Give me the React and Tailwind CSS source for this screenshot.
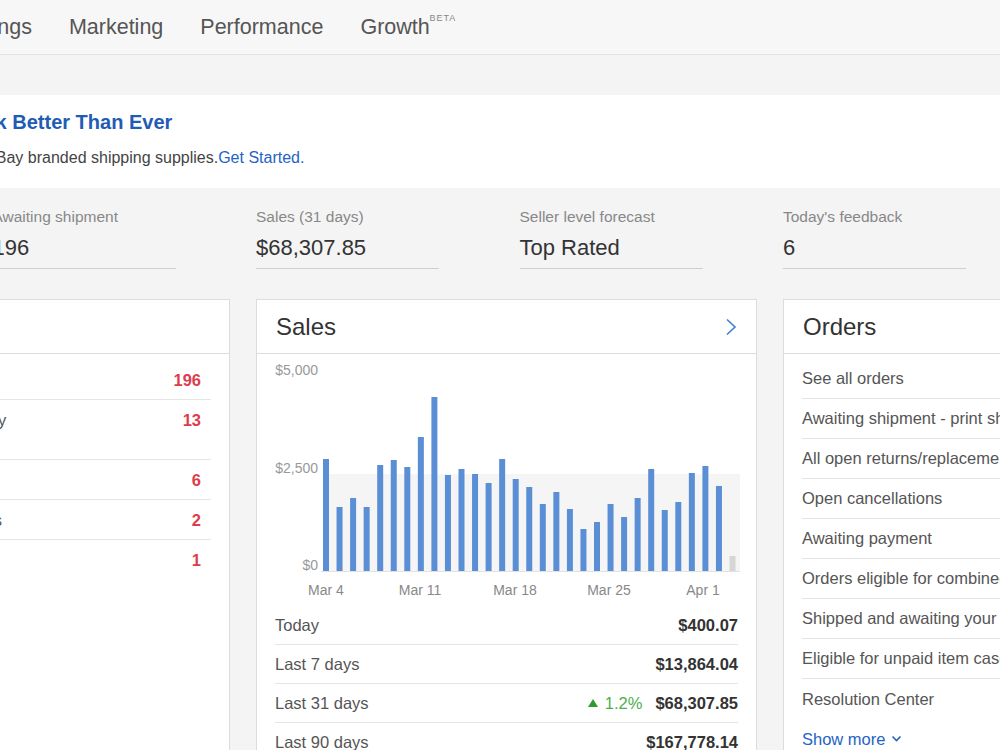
import React from 'react';

const bars = [112, 64, 73, 64, 106, 111, 104, 134, 174, 96, 102, 97, 88, 112, 92, 84, 67, 79, 62, 42, 49, 67, 54, 73, 102, 61, 69, 98, 105, 85];

const taskRows = [
  { label: ['Awaiting shipment'], count: 196 },
  { label: ['Awaiting shipment: must ship today', 'or tomorrow'], count: 13 },
  { label: ['Open returns'], count: 6 },
  { label: ['Buyer messages awaiting answers'], count: 2 },
  { label: ['Open cancellations'], count: 1 },
];

const stats = [
  { label: 'Active listings', value: '1,204' },
  { label: 'Awaiting shipment', value: '196' },
  { label: 'Sales (31 days)', value: '$68,307.85' },
  { label: 'Seller level forecast', value: 'Top Rated' },
  { label: "Today's feedback", value: '6' },
];

const salesRows = [
  { label: 'Today', value: '$400.07' },
  { label: 'Last 7 days', value: '$13,864.04' },
  { label: 'Last 31 days', value: '$68,307.85', change: '1.2%' },
  { label: 'Last 90 days', value: '$167,778.14' },
];

const orderLinks = [
  'See all orders',
  'Awaiting shipment - print shipping labels',
  'All open returns/replacements',
  'Open cancellations',
  'Awaiting payment',
  'Orders eligible for combined purchases',
  'Shipped and awaiting your feedback',
  'Eligible for unpaid item cases',
];

function Card({ title, action, children }) {
  return (
    <div className="w-[501px] shrink-0 border border-[#dcdcdc] bg-white">
      <div className="flex h-[54px] items-center justify-between border-b border-[#dcdcdc] px-[19px]">
        <h2 className="text-[24px] text-[#333]">{title}</h2>
        {action}
      </div>
      {children}
    </div>
  );
}

function SalesChart() {
  const base = 217;
  return (
    <svg width="499" height="252" className="block" style={{ fontFamily: 'inherit' }}>
      <rect x="70" y="120" width="413" height="97" fill="#f5f5f5" />
      <line x1="64" y1={base + 0.5} x2="483" y2={base + 0.5} stroke="#e2e2e2" />
      <text x="61" y="21" textAnchor="end" fontSize="14" fill="#999">$5,000</text>
      <text x="61" y="119" textAnchor="end" fontSize="14" fill="#999">$2,500</text>
      <text x="61" y="216" textAnchor="end" fontSize="14" fill="#999">$0</text>
      {bars.map((h, i) => (
        <rect key={i} x={66 + i * 13.55} y={base - h} width="6" height={h} fill="#5b8fd5" />
      ))}
      <rect x={66 + 30 * 13.55} y={base - 15} width="6" height="15" fill="#d6d6d6" />
      {[
        ['Mar 4', 69],
        ['Mar 11', 163],
        ['Mar 18', 258],
        ['Mar 25', 352],
        ['Apr 1', 446],
      ].map(([t, x]) => (
        <text key={t} x={x} y="241" textAnchor="middle" fontSize="14" fill="#888">
          {t}
        </text>
      ))}
    </svg>
  );
}

export default function App() {
  return (
    <div className="h-[750px] w-[1000px] overflow-hidden bg-[#f4f4f4] font-['Liberation_Sans',Arial,sans-serif]">
      <nav className="-ml-[41px] flex h-[55px] items-center gap-[37px] whitespace-nowrap border-b border-[#e3e3e3] bg-[#f7f7f7] text-[21.5px] text-[#555]">
        <span>Listings</span>
        <span>Marketing</span>
        <span>Performance</span>
        <span className="relative">
          Growth
          <span className="absolute left-[69px] top-[1px] text-[9px] tracking-[1px] text-[#888]">BETA</span>
        </span>
      </nav>

      <div className="mt-[40px] h-[93px] bg-white pt-[15px]">
        <div className="whitespace-nowrap">
          <div className="-ml-[40px] text-[20px] font-bold leading-[24px] text-[#1f5cb5]">Pack Better Than Ever</div>
          <div className="-ml-[46px] mt-[14px] text-[16px] leading-[20px] text-[#444]">
            Use eBay branded shipping supplies.<span className="text-[#2563c4]">Get Started.</span>
          </div>
        </div>
      </div>

      <div className="-ml-[271px]">
        <div className="flex gap-[80.5px] pt-[19px]">
          {stats.map((s) => (
            <div key={s.label} className="w-[183px] shrink-0 border-b border-[#cfcfcf] pb-[6px]">
              <div className="whitespace-nowrap text-[15.5px] leading-[20px] text-[#888]">{s.label}</div>
              <div className="mt-[7px] text-[22px] leading-[28px] text-[#333]">{s.value}</div>
            </div>
          ))}
        </div>

        <div className="mt-[30px] flex gap-[26px]">
          <Card title="Tasks">
            <div className="mx-[18px] pt-[6px] text-[16.5px] leading-[20px] text-[#555]">
              {taskRows.map((r, i) => (
                <div
                  key={i}
                  className={`flex items-start justify-between pb-[9px] pr-[10px] pt-[10px] ${i < taskRows.length - 1 ? 'border-b border-[#e5e5e5]' : ''}`}
                >
                  <div className="whitespace-nowrap">
                    {r.label.map((l) => (
                      <div key={l}>{l}</div>
                    ))}
                  </div>
                  <span className="font-bold text-[#dd3c4c]">{r.count}</span>
                </div>
              ))}
            </div>
          </Card>

          <Card
            title="Sales"
            action={
              <svg width="12" height="18" viewBox="0 0 12 18">
                <polyline points="2,1.5 10,9 2,16.5" fill="none" stroke="#3d7fd1" strokeWidth="1.6" />
              </svg>
            }
          >
            <SalesChart />
            <div className="mx-[18px] text-[16.5px] text-[#555]">
              {salesRows.map((r, i) => (
                <div
                  key={r.label}
                  className={`flex h-[39px] items-center justify-between ${i < salesRows.length - 1 ? 'border-b border-[#e5e5e5]' : ''}`}
                >
                  <span>{r.label}</span>
                  <span className="flex items-center gap-[13px]">
                    {r.change && (
                      <span className="flex items-center gap-[7px] text-[#4cae4c]">
                        <svg width="10" height="8" viewBox="0 0 10 8">
                          <polygon points="5,0 10,8 0,8" fill="#2f9a2f" />
                        </svg>
                        {r.change}
                      </span>
                    )}
                    <span className="font-bold text-[#333]">{r.value}</span>
                  </span>
                </div>
              ))}
            </div>
          </Card>

          <Card title="Orders">
            <div className="mx-[18px] whitespace-nowrap pt-[5px] text-[16.5px] text-[#555]">
              {orderLinks.map((l) => (
                <div key={l} className="flex h-[40px] items-center border-b border-[#e5e5e5]">
                  {l}
                </div>
              ))}
              <div className="flex h-[40px] items-center">Resolution Center</div>
              <div className="flex h-[40px] items-center gap-[6px] text-[#2563c4]">
                Show more
                <svg width="11" height="8" viewBox="0 0 11 8">
                  <polyline points="1.5,1.5 5.5,5.5 9.5,1.5" fill="none" stroke="#2563c4" strokeWidth="1.6" />
                </svg>
              </div>
            </div>
          </Card>
        </div>
      </div>
    </div>
  );
}
